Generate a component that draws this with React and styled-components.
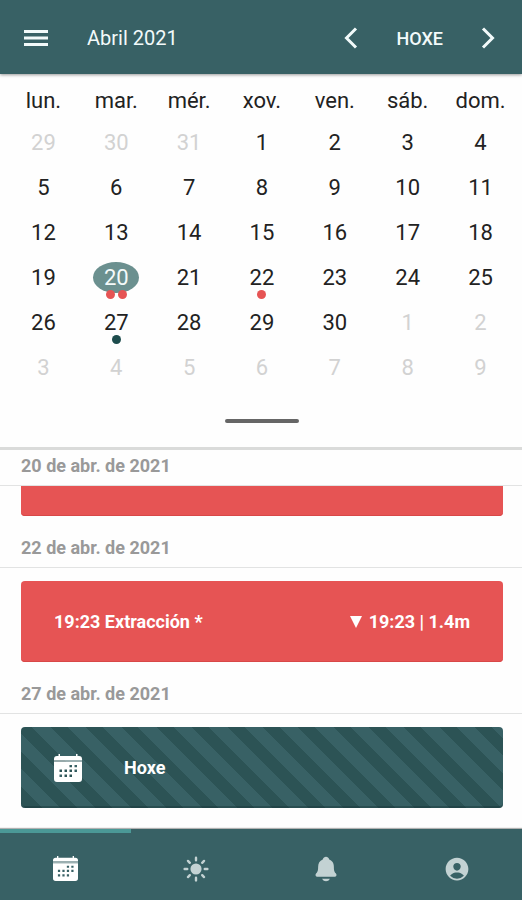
import React, { useState } from 'react';
import styled, { createGlobalStyle } from 'styled-components';
import { IoSunny, IoNotifications, IoPersonCircle } from 'react-icons/io5';

const weekDays = ['lun.', 'mar.', 'mér.', 'xov.', 'ven.', 'sáb.', 'dom.'];

const weeks = [
  [29, 30, 31, 1, 2, 3, 4],
  [5, 6, 7, 8, 9, 10, 11],
  [12, 13, 14, 15, 16, 17, 18],
  [19, 20, 21, 22, 23, 24, 25],
  [26, 27, 28, 29, 30, 1, 2],
  [3, 4, 5, 6, 7, 8, 9],
];

const red = '#e65454';
const green = '#386165';

const events = {
  20: [red, red],
  22: [red],
  27: ['#1d4c4d'],
};

// solid calendar, the header line and the days are cut out of the page
const CalendarIcon = ({ size }) => (
  <svg width={size} height={size} viewBox="0 0 28 28" fill="currentColor">
    <path d="M4.500 0h1.500v2h16V0h1.500v2H25a3 3 0 0 1 3 3v1H0V5a3 3 0 0 1 3-3h1.500z" />
    <path d="M0 6h28v2H0z" opacity="0.5" />
    <path
      fillRule="evenodd"
      d="M0 8h28v17a3 3 0 0 1-3 3H3a3 3 0 0 1-3-3z
        M15.500 11v2.200h2.500v-2.200z M20.500 11v2.200h2.500v-2.200z
        M5.500 15.500v2.500h2.500v-2.500z M10.500 15.500v2.500h2.500v-2.500z M15.500 15.500v2.500h2.500v-2.500z M20.500 15.500v2.500h2.500v-2.500z
        M5.500 20.500v2.500h2.500v-2.500z M10.500 20.500v2.500h2.500v-2.500z M15.500 20.500v2.500h2.500v-2.500z"
    />
  </svg>
);

const tabs = [
  { name: 'Calendario', Icon: CalendarIcon, size: 25 },
  { name: 'Tempo', Icon: IoSunny, size: 28 },
  { name: 'Avisos', Icon: IoNotifications, size: 28 },
  { name: 'Perfil', Icon: IoPersonCircle, size: 28 },
];

const isOutside = (day, week) => (week === 0 && day > 7) || (week > 3 && day < 10);

const Month = ({ selected, onSelect }) => (
  <MonthTable>
    <thead>
      <tr>
        {weekDays.map(name => <th key={name} scope="col">{name}</th>)}
      </tr>
    </thead>
    <tbody>
      {weeks.map((week, i) => (
        <tr key={i}>
          {week.map(day => {
            const outside = isOutside(day, i);
            const dots = outside ? [] : events[day] || [];
            return (
              <td key={day}>
                <Day
                  type="button"
                  $outside={outside}
                  $selected={!outside && day === selected}
                  onClick={() => !outside && onSelect(day)}
                >
                  {day}
                  <Dots>
                    {dots.map((color, n) => <Dot key={n} $color={color} />)}
                  </Dots>
                </Day>
              </td>
            );
          })}
        </tr>
      ))}
    </tbody>
  </MonthTable>
);

const App = () => {
  const [selected, setSelected] = useState(20);
  const [tab, setTab] = useState(0);

  return (
    <Screen>
      <GlobalStyle />
      <Header>
        <IconButton type="button" aria-label="Menú">
          <svg width="24" height="18" viewBox="0 0 24 18" fill="none" stroke="currentColor" strokeWidth="3">
            <path d="M0 2.5h24M0 9h24M0 15.5h24" />
          </svg>
        </IconButton>
        <Title>Abril 2021</Title>
        <IconButton type="button" aria-label="Mes anterior">
          <svg width="14" height="22" viewBox="0 0 14 22" fill="none" stroke="currentColor" strokeWidth="3">
            <path d="M12 1.5L2.5 11l9.500 9.500" />
          </svg>
        </IconButton>
        <TodayButton type="button" onClick={() => setSelected(27)}>HOXE</TodayButton>
        <IconButton type="button" aria-label="Mes seguinte">
          <svg width="14" height="22" viewBox="0 0 14 22" fill="none" stroke="currentColor" strokeWidth="3">
            <path d="M2 1.500L11.500 11L2 20.500" />
          </svg>
        </IconButton>
      </Header>

      <Calendar>
        <Month selected={selected} onSelect={setSelected} />
        <Handle />
      </Calendar>

      <Agenda>
        <section>
          <DateHeading>20 de abr. de 2021</DateHeading>
          <ClippedCard />
        </section>
        <section>
          <DateHeading>22 de abr. de 2021</DateHeading>
          <EventCard>
            <span>19:23 Extracción *</span>
            <Tide>
              <svg width="12" height="12" viewBox="0 0 12 12" fill="currentColor">
                <path d="M0 0h12L6 12z" />
              </svg>
              19:23 | 1.4m
            </Tide>
          </EventCard>
        </section>
        <section>
          <DateHeading>27 de abr. de 2021</DateHeading>
          <TodayCard>
            <CalendarIcon size={28} />
            <span>Hoxe</span>
          </TodayCard>
        </section>
      </Agenda>

      <TabBar>
        {tabs.map(({ name, Icon, size }, i) => (
          <Tab key={name} type="button" aria-label={name} $active={i === tab} onClick={() => setTab(i)}>
            <Icon size={size} />
          </Tab>
        ))}
      </TabBar>
    </Screen>
  );
};

export default App;


const GlobalStyle = createGlobalStyle`
  * {
    box-sizing: border-box;
  }

  body {
    margin: 0;
    background: #fefefe;
    font-family: Roboto, "Liberation Sans", sans-serif;
  }

  button {
    padding: 0;
    border: none;
    background: none;
    color: inherit;
    font: inherit;
    cursor: pointer;
  }

  svg {
    display: block;
    flex-shrink: 0;
  }
`;

const Screen = styled.div`
  display: flex;
  flex-direction: column;
  min-height: 100vh;
`;

const Header = styled.header`
  display: flex;
  align-items: center;
  height: 74px;
  padding: 2px 27px 0 24px;
  background: ${green};
  color: #f2fafa;
  box-shadow: 0 1px 3px rgba(0, 0, 0, 0.4);
`;

const IconButton = styled.button`
  display: flex;
`;

const Title = styled.h1`
  flex: 1;
  margin: 0 0 0 39px;
  font-size: 20px;
  font-weight: 400;
  line-height: 24px;
`;

const TodayButton = styled.button`
  margin: 0 38px;
  font-size: 18px;
  font-weight: 500;
`;

const Calendar = styled.section`
  padding: 6px 5px 24px 7px;
  border-bottom: 3px solid #dadbda;
`;

const MonthTable = styled.table`
  width: 100%;
  table-layout: fixed;
  border-collapse: collapse;
  font-size: 22px;
  color: #222;

  th {
    height: 40px;
    padding: 0;
    font-weight: 400;
  }

  td {
    height: 45px;
    padding: 0;
  }
`;

const Day = styled.button`
  position: relative;
  display: block;
  width: 46px;
  height: 31px;
  margin: 0 auto;
  border-radius: 50%;
  line-height: 31px;
  color: ${props => (props.$selected ? '#f4fafa' : props.$outside ? '#d2d2d2' : '#222')};
  background: ${props => (props.$selected ? '#6b908f' : 'none')};
`;

const Dots = styled.span`
  position: absolute;
  right: 0;
  bottom: -6px;
  left: 0;
  display: flex;
  justify-content: center;
  gap: 3px;
`;

const Dot = styled.span`
  width: 9px;
  height: 9px;
  border-radius: 50%;
  background: ${props => props.$color};
`;

const Handle = styled.div`
  width: 74px;
  height: 4px;
  margin: 29px auto 0;
  border-radius: 2px;
  background: #666;
`;

const Agenda = styled.main`
  flex: 1;
`;

const DateHeading = styled.h2`
  margin: 0;
  padding: 6px 21px 9px;
  border-bottom: 1px solid #e2e3e3;
  font-size: 18px;
  font-weight: 700;
  line-height: 20px;
  color: #999;
`;

const Card = styled.article`
  display: flex;
  align-items: center;
  height: 81px;
  margin: 13px 19px 16px 21px;
  padding: 0 33px;
  border-radius: 4px;
  font-size: 18px;
  font-weight: 700;
  color: #fff;
`;

const EventCard = styled(Card)`
  justify-content: space-between;
  background: ${red};
  box-shadow: inset 0 -1px 0 #d84848;
`;

const ClippedCard = styled(EventCard)`
  height: 30px;
  margin-top: 0;
  border-radius: 0 0 4px 4px;
`;

const Tide = styled.span`
  display: flex;
  align-items: center;
  gap: 7px;
`;

const TodayCard = styled(Card)`
  gap: 42px;
  background: repeating-linear-gradient(45deg, ${green} 0 3px, #2c5355 3px 15px, ${green} 15px 25px);
  box-shadow: inset 0 -2px 0 rgba(20, 50, 52, 0.4);
`;

const TabBar = styled.nav`
  display: flex;
  height: 71px;
  background: ${green};
  box-shadow: 0 -1px 1px rgba(0, 0, 0, 0.3);
`;

const Tab = styled.button`
  display: flex;
  flex: 1;
  align-items: center;
  justify-content: center;
  padding-top: 4px;
  border-top: 4px solid ${props => (props.$active ? '#4b9997' : 'transparent')};
  color: ${props => (props.$active ? '#fff' : '#c3d2d3')};
`;
